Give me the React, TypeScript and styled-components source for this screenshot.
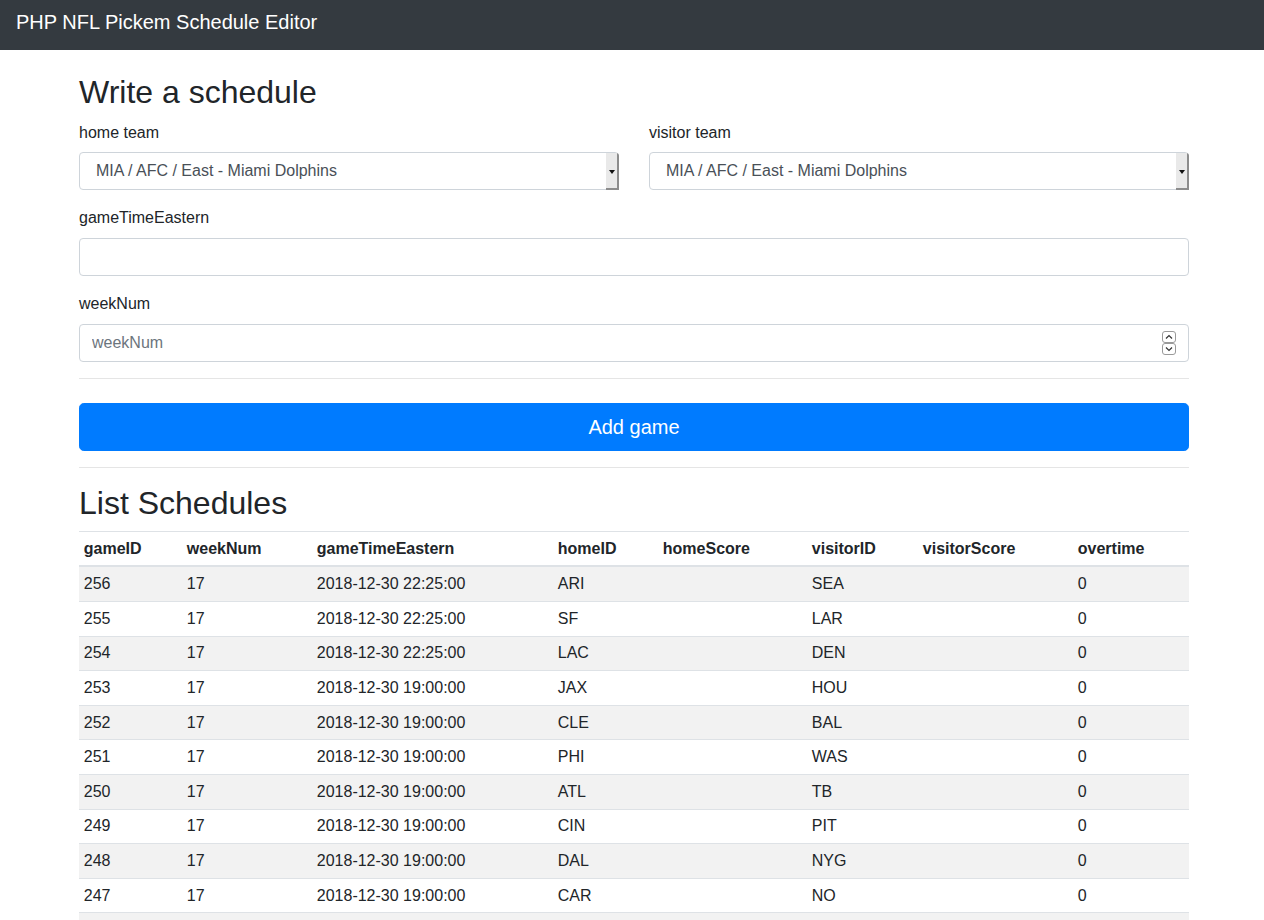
import React from "react";
import styled, { createGlobalStyle } from "styled-components";

const Global = createGlobalStyle`
  html, body { margin: 0; padding: 0; }
  body {
    font-family: "Liberation Sans", Arial, sans-serif;
    font-size: 16px;
    line-height: 1.5;
    color: #212529;
    background: #fff;
  }
  * { box-sizing: border-box; }
`;

const Navbar = styled.nav`
  height: 50px;
  background: #343a40;
  padding: 7px 16px 0;
`;

const Brand = styled.span`
  display: inline-block;
  font-size: 20px;
  line-height: 30px;
  color: #fff;
`;

const Container = styled.main`
  width: 1110px;
  margin-left: 79px;
  padding-top: 23px;
`;

const Heading = styled.h2`
  font-size: 32px;
  font-weight: 500;
  line-height: 1.2;
  margin: 0 0 8px;
`;

const FormRow = styled.div`
  display: grid;
  grid-template-columns: 1fr 1fr;
  column-gap: 30px;
`;

const Group = styled.div<{ $top?: number }>`
  margin-bottom: 16px;
  padding-top: ${(p) => p.$top ?? 0}px;
`;

const Label = styled.label<{ $gap?: number }>`
  display: block;
  margin-bottom: ${(p) => p.$gap ?? 8}px;
`;

const Field = styled.div`
  position: relative;
`;

const Select = styled.select`
  display: block;
  width: 100%;
  height: 38px;
  padding: 6px 12px 6px 16px;
  font-family: inherit;
  font-size: 16px;
  line-height: 1.5;
  color: #495057;
  background: #fff;
  border: 1px solid #ced4da;
  border-radius: 4px;
  appearance: none;
  -webkit-appearance: none;
`;

const SelectButton = styled.span`
  position: absolute;
  right: 0;
  top: 1px;
  bottom: 0;
  width: 13px;
  background: #e9e9e9;
  box-shadow: inset -2px -2px 0 #8c8c8c;
  border-top-right-radius: 3px;
  pointer-events: none;
  &::after {
    content: "";
    position: absolute;
    left: 3px;
    top: 17px;
    border-left: 3px solid transparent;
    border-right: 3px solid transparent;
    border-top: 4px solid #111;
  }
`;

const Input = styled.input`
  display: block;
  width: 100%;
  height: 38px;
  padding: 6px 12px;
  font-family: inherit;
  font-size: 16px;
  line-height: 1.5;
  color: #495057;
  background: #fff;
  border: 1px solid #ced4da;
  border-radius: 4px;
  &::placeholder { color: #6c757d; }
  &::-webkit-inner-spin-button,
  &::-webkit-outer-spin-button {
    -webkit-appearance: none;
    margin: 0;
  }
`;

const Spinner = styled.span`
  position: absolute;
  right: 13px;
  top: 7px;
  display: flex;
  flex-direction: column;
  pointer-events: none;
`;

const SpinBox = styled.span`
  width: 14px;
  height: 12px;
  border: 1px solid #9a9a9a;
  border-radius: 3px;
  background: #fff;
  display: flex;
  align-items: center;
  justify-content: center;
`;

const Rule = styled.hr`
  margin: 16px 0;
  border: 0;
  border-top: 1px solid rgba(0, 0, 0, 0.1);
`;

const Button = styled.button`
  display: block;
  width: 100%;
  margin-top: 24px;
  height: 48px;
  padding: 8px 16px;
  font-family: inherit;
  font-size: 20px;
  line-height: 1.5;
  color: #fff;
  background: #007bff;
  border: 1px solid #007bff;
  border-radius: 4.8px;
`;

const Table = styled.table`
  width: 100%;
  border-collapse: collapse;
  table-layout: fixed;
`;

const Th = styled.th`
  text-align: left;
  font-weight: bold;
  padding: 4.8px;
  line-height: 24px;
  border-top: 1px solid #dee2e6;
  border-bottom: 2px solid #dee2e6;
`;

const Row = styled.tr<{ $striped: boolean }>`
  background: ${(p) => (p.$striped ? "rgba(0,0,0,0.05)" : "transparent")};
`;

const Td = styled.td`
  padding: 4.8px;
  line-height: 24px;
  border-top: 1px solid #dee2e6;
`;

const teamOption = "MIA / AFC / East - Miami Dolphins";

const columns: [string, number][] = [
  ["gameID", 103],
  ["weekNum", 130],
  ["gameTimeEastern", 241],
  ["homeID", 105],
  ["homeScore", 149],
  ["visitorID", 111],
  ["visitorScore", 155],
  ["overtime", 116],
];

const games: [number, string, string, string][] = [
  [256, "2018-12-30 22:25:00", "ARI", "SEA"],
  [255, "2018-12-30 22:25:00", "SF", "LAR"],
  [254, "2018-12-30 22:25:00", "LAC", "DEN"],
  [253, "2018-12-30 19:00:00", "JAX", "HOU"],
  [252, "2018-12-30 19:00:00", "CLE", "BAL"],
  [251, "2018-12-30 19:00:00", "PHI", "WAS"],
  [250, "2018-12-30 19:00:00", "ATL", "TB"],
  [249, "2018-12-30 19:00:00", "CIN", "PIT"],
  [248, "2018-12-30 19:00:00", "DAL", "NYG"],
  [247, "2018-12-30 19:00:00", "CAR", "NO"],
  [246, "2018-12-30 19:00:00", "NE", "NYJ"],
  [245, "2018-12-30 19:00:00", "MIN", "CHI"],
];

const Chevron = ({ up }: { up?: boolean }) => (
  <svg width="8" height="6" viewBox="0 0 8 6">
    <path
      d={up ? "M1 4.5 L4 1.5 L7 4.5" : "M1 1.5 L4 4.5 L7 1.5"}
      fill="none"
      stroke="#333"
      strokeWidth="1.2"
    />
  </svg>
);

function TeamSelect() {
  return (
    <Field>
      <Select defaultValue={teamOption}>
        <option>{teamOption}</option>
      </Select>
      <SelectButton />
    </Field>
  );
}

export default function App() {
  return (
    <>
      <Global />
      <Navbar>
        <Brand>PHP NFL Pickem Schedule Editor</Brand>
      </Navbar>
      <Container>
        <Heading>Write a schedule</Heading>
        <FormRow>
          <Group $top={2}>
            <Label $gap={7}>home team</Label>
            <TeamSelect />
          </Group>
          <Group $top={2}>
            <Label $gap={7}>visitor team</Label>
            <TeamSelect />
          </Group>
        </FormRow>
        <Group>
          <Label>gameTimeEastern</Label>
          <Input type="text" />
        </Group>
        <Group>
          <Label>weekNum</Label>
          <Field>
            <Input type="number" placeholder="weekNum" />
            <Spinner>
              <SpinBox>
                <Chevron up />
              </SpinBox>
              <SpinBox>
                <Chevron />
              </SpinBox>
            </Spinner>
          </Field>
        </Group>
        <Rule />
        <Button>Add game</Button>
        <Rule />
        <Heading>List Schedules</Heading>
        <Table>
          <colgroup>
            {columns.map(([n, w]) => (
              <col key={n} style={{ width: w }} />
            ))}
          </colgroup>
          <thead>
            <tr>
              {columns.map(([n]) => (
                <Th key={n}>{n}</Th>
              ))}
            </tr>
          </thead>
          <tbody>
            {games.map(([id, time, home, visitor], i) => (
              <Row key={id} $striped={i % 2 === 0}>
                <Td>{id}</Td>
                <Td>17</Td>
                <Td>{time}</Td>
                <Td>{home}</Td>
                <Td></Td>
                <Td>{visitor}</Td>
                <Td></Td>
                <Td>0</Td>
              </Row>
            ))}
          </tbody>
        </Table>
      </Container>
    </>
  );
}
